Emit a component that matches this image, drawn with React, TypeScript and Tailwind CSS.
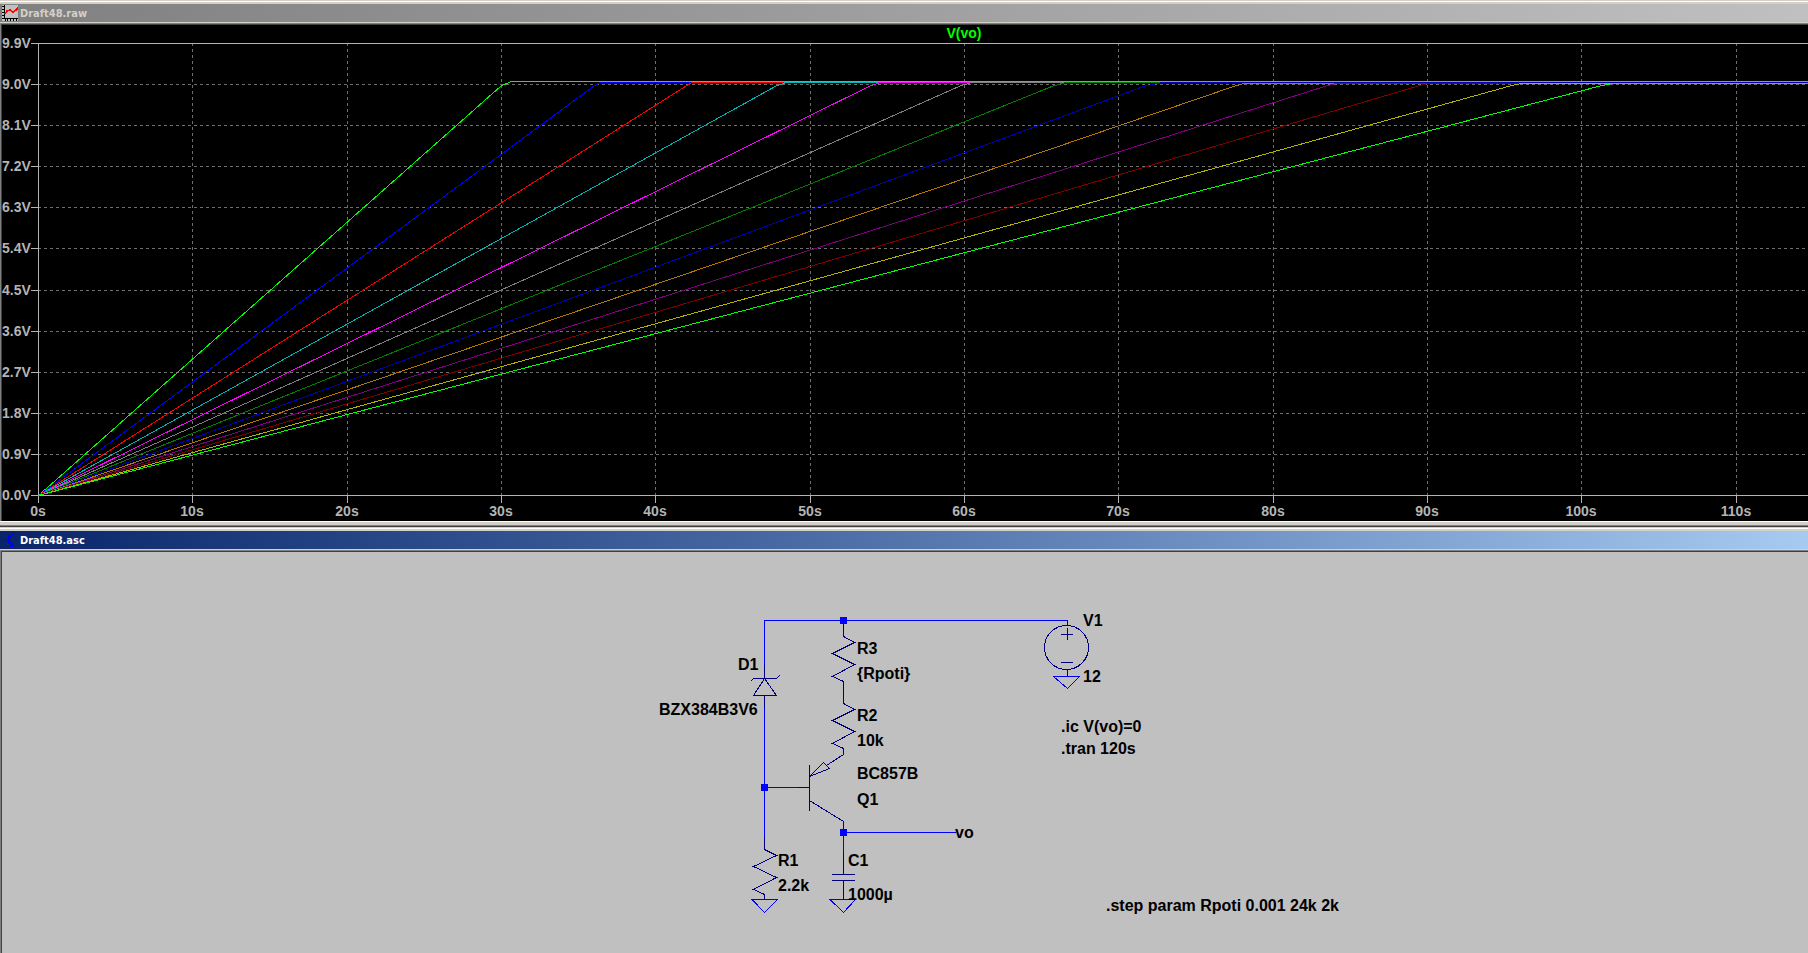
const AXIS = "#b4b4b4";
const GRID = "#6e6e6e";

const ORIGIN_X = 36;
const TOP = 18;
const BOTTOM = 470;

const voltTicks = ["9.9V", "9.0V", "8.1V", "7.2V", "6.3V", "5.4V", "4.5V", "3.6V", "2.7V", "1.8V", "0.9V", "0.0V"];
const timeTicks = ["0s", "10s", "20s", "30s", "40s", "50s", "60s", "70s", "80s", "90s", "100s", "110s"];

const tickX = (i: number) => Math.round(ORIGIN_X + i * 154.34);
const tickY = (i: number) => Math.round(TOP + (i * (BOTTOM - TOP)) / 11);

// one entry per step of Rpoti: where the ramp ends, where the flat part starts
const traces = [
  { color: "#00ff00", bend: 499, flat: 509, level: 56 },
  { color: "#0000ff", bend: 592, flat: 598, level: 57 },
  { color: "#ff0000", bend: 684, flat: 690, level: 57 },
  { color: "#00b4b4", bend: 774, flat: 784, level: 57 },
  { color: "#ff00ff", bend: 868, flat: 878, level: 57 },
  { color: "#808080", bend: 958, flat: 970, level: 57 },
  { color: "#008000", bend: 1051, flat: 1064, level: 57 },
  { color: "#0000b4", bend: 1143, flat: 1161, level: 57 },
  { color: "#b47800", bend: 1233, flat: 1242, level: 58 },
  { color: "#800080", bend: 1324, flat: 1334, level: 58 },
  { color: "#800000", bend: 1416, flat: 1426, level: 58 },
  { color: "#b4b400", bend: 1508, flat: 1519, level: 58 },
  { color: "#00ff00", bend: 1598, flat: 1611, level: 58 },
];

function PlotIcon() {
  return (
    <svg width="16" height="16" shapeRendering="crispEdges" aria-hidden="true">
      <rect width="16" height="16" fill="#c0c0c0" />
      <path d="M2.5 0V13.5H16" fill="none" stroke="#000" />
      <path d="M0 1.5h2M0 4.5h2M0 7.5h2M0 10.5h2M0 13.5h2M3.5 14v2M5.5 14v2M8.5 14v2M11.5 14v2M14.5 14v2" stroke="#000" />
      <path d="M3 9l2-3 3-1 3 2 3-2 2-2" fill="none" stroke="#f00" strokeWidth="1.5" />
    </svg>
  );
}

function TransistorIcon() {
  return (
    <svg width="16" height="16" shapeRendering="crispEdges" aria-hidden="true">
      <path d="M2 7.5h4M11.5 0v1l-4 5M7 9l5 5" fill="none" stroke="#00f" />
      <path d="M6 3h2v9h-2z" fill="#00f" />
      <path d="M11 10.5v4.5H7.5z" fill="#00f" />
    </svg>
  );
}

function Waveforms() {
  return (
    <svg className="block h-full w-full" fontFamily="'Liberation Sans', Arial, sans-serif" fontSize="14" fontWeight="700">
      <g shapeRendering="crispEdges">
        {timeTicks.slice(1).map((label, i) => (
          <line key={label} x1={tickX(i + 1) + 0.5} x2={tickX(i + 1) + 0.5} y1={TOP} y2={BOTTOM} stroke={GRID} strokeDasharray="3 3" />
        ))}
        {voltTicks.slice(1, -1).map((label, i) => (
          <line key={label} x1={ORIGIN_X} x2="100%" y1={tickY(i + 1) + 0.5} y2={tickY(i + 1) + 0.5} stroke={GRID} strokeDasharray="3 3" />
        ))}
        {voltTicks.map((label, i) => (
          <line key={label} x1="29" x2={ORIGIN_X} y1={tickY(i) + 0.5} y2={tickY(i) + 0.5} stroke={AXIS} />
        ))}
        {timeTicks.map((label, i) => (
          <line key={label} x1={tickX(i) + 0.5} x2={tickX(i) + 0.5} y1={BOTTOM} y2={BOTTOM + 8} stroke={AXIS} />
        ))}
        <line x1={ORIGIN_X} x2="100%" y1={TOP + 0.5} y2={TOP + 0.5} stroke={AXIS} />
        <line x1={ORIGIN_X} x2="100%" y1={BOTTOM + 0.5} y2={BOTTOM + 0.5} stroke={AXIS} />
        <line x1={ORIGIN_X + 0.5} x2={ORIGIN_X + 0.5} y1={TOP} y2={BOTTOM} stroke={AXIS} />
        {traces.map((t) => (
          <g key={t.bend}>
            <polyline
              points={`${ORIGIN_X + 0.5},${BOTTOM + 0.5} ${t.bend},61 ${t.flat},${t.level + 0.5}`}
              fill="none"
              stroke={t.color}
            />
            <rect x={t.flat} y={t.level} width="100%" height="1" fill={t.color} />
          </g>
        ))}
      </g>
      <g fill={AXIS}>
        {voltTicks.map((label, i) => (
          <text key={label} x="0" y={tickY(i) + 5}>{label}</text>
        ))}
        {timeTicks.map((label, i) => (
          <text key={label} x={tickX(i)} y={BOTTOM + 21} textAnchor="middle">{label}</text>
        ))}
      </g>
      <text x="962" y="13" textAnchor="middle" fill="#00ff00">V(vo)</text>
    </svg>
  );
}

const partLabels = [
  { x: 736, y: 118, text: "D1" },
  { x: 657, y: 163, text: "BZX384B3V6" },
  { x: 855, y: 102, text: "R3" },
  { x: 855, y: 127, text: "{Rpoti}" },
  { x: 855, y: 169, text: "R2" },
  { x: 855, y: 194, text: "10k" },
  { x: 855, y: 227, text: "BC857B" },
  { x: 855, y: 253, text: "Q1" },
  { x: 776, y: 314, text: "R1" },
  { x: 776, y: 339, text: "2.2k" },
  { x: 846, y: 314, text: "C1" },
  { x: 846, y: 348, text: "1000µ" },
  { x: 953, y: 286, text: "vo" },
  { x: 1081, y: 74, text: "V1" },
  { x: 1081, y: 130, text: "12" },
  { x: 1059, y: 180, text: ".ic V(vo)=0" },
  { x: 1059, y: 202, text: ".tran 120s" },
  { x: 1104, y: 359, text: ".step param Rpoti 0.001 24k 2k" },
];

function Schematic() {
  return (
    <svg className="block h-full w-full" fontFamily="'Liberation Sans', Arial, sans-serif" fontSize="16" fontWeight="700">
      {/* wires and grounds */}
      <g fill="none" stroke="#0000ff" shapeRendering="crispEdges">
        <path d="M762.5 113V68.5H1065.5" />
        <path d="M762.5 155V285M762.5 235.5H796M841.5 280.5H954M841.5 280V300" />
        <path d="M750 347.5H775.5L762.5 360.5zM828 347.5H853.5L841.5 360.5z" />
        <path d="M1051.5 124.5H1077.5L1065.5 136.5z" />
      </g>
      <g fill="none" stroke="#000080" shapeRendering="crispEdges">
        {/* R3, R2 */}
        <path d="M841.5 69V84.5L852.5 90.5L830.5 101.5L852.5 112.5L830.5 124.5L841.5 129.5V151.5L852.5 157.5L830.5 168.5L852.5 179.5L830.5 191.5L841.5 196.5V202.5L824.5 213.5" />
        {/* R1 */}
        <path d="M762.5 285V297.5L774.5 303.5L751.5 314.5L774.5 325.5L751.5 337.5L762.5 342.5V347.5" />
        {/* D1 */}
        <path d="M762.5 113V126M762.5 143V155M748.5 129.5L751.5 126.5H774.5L777.5 123.5M762.5 126.5L751.5 143.5H774.5z" />
        {/* Q1 */}
        <path d="M796 235.5H807.5M807.5 213V258.5M807.5 248.5L841.5 269.5V281M807.5 224.5L821.5 210.5L827.5 216.5z" />
        {/* C1 */}
        <path d="M841.5 300V322.5M830 322.5H853M830 328.5H853M841.5 328.5V347" />
        {/* V1 */}
        <path d="M1065.5 68V73.5M1065.5 117.5V124M1059 82.5H1071M1065.5 76V88M1059 110.5H1071" />
        <circle cx="1064.5" cy="95.5" r="22" />
      </g>
      <g fill="#0000ff" shapeRendering="crispEdges">
        <rect x="838" y="65" width="7" height="7" />
        <rect x="759" y="232" width="7" height="7" />
        <rect x="838" y="277" width="7" height="7" />
      </g>
      <g fill="#000">
        {partLabels.map((l) => (
          <text key={l.text} x={l.x} y={l.y}>{l.text}</text>
        ))}
      </g>
    </svg>
  );
}

export default function App() {
  return (
    <main className="flex h-screen flex-col overflow-hidden bg-[#d4d0c8] font-['DejaVu_Sans_Condensed','Noto_Sans',sans-serif]">
      <section className="flex shrink-0 flex-col border-t border-[#d4d0c8]">
        <div className="border-t border-white pt-0.5">
          <header className="flex h-[18px] items-center gap-0.5 bg-linear-to-r from-[#808080] to-[#c0c0c0] pl-0.5">
            <PlotIcon />
            <h2 className="text-[11px] leading-none font-bold text-[#d4d0c8]">Draft48.raw</h2>
          </header>
        </div>
        <div className="mt-px border-t border-l border-[#808080]">
          <div className="h-[497px] border-t border-l border-[#404040] bg-black">
            <Waveforms />
          </div>
        </div>
        <div className="h-1 border-t border-white" />
        <div className="h-0.5 border-t border-[#808080] bg-[#404040]" />
      </section>

      <section className="flex min-h-0 flex-1 flex-col border-t border-[#d4d0c8]">
        <div className="border-t border-white pt-0.5">
          <header className="flex h-[18px] items-center gap-0.5 bg-linear-to-r from-[#0a246a] to-[#a6caf0] pl-0.5">
            <TransistorIcon />
            <h2 className="text-[11px] leading-none font-bold text-white">Draft48.asc</h2>
          </header>
        </div>
        <div className="mt-px flex min-h-0 flex-1 flex-col border-t border-l border-[#808080]">
          <div className="min-h-0 flex-1 border-t border-l border-[#404040] bg-[#c0c0c0]">
            <Schematic />
          </div>
        </div>
      </section>
    </main>
  );
}
